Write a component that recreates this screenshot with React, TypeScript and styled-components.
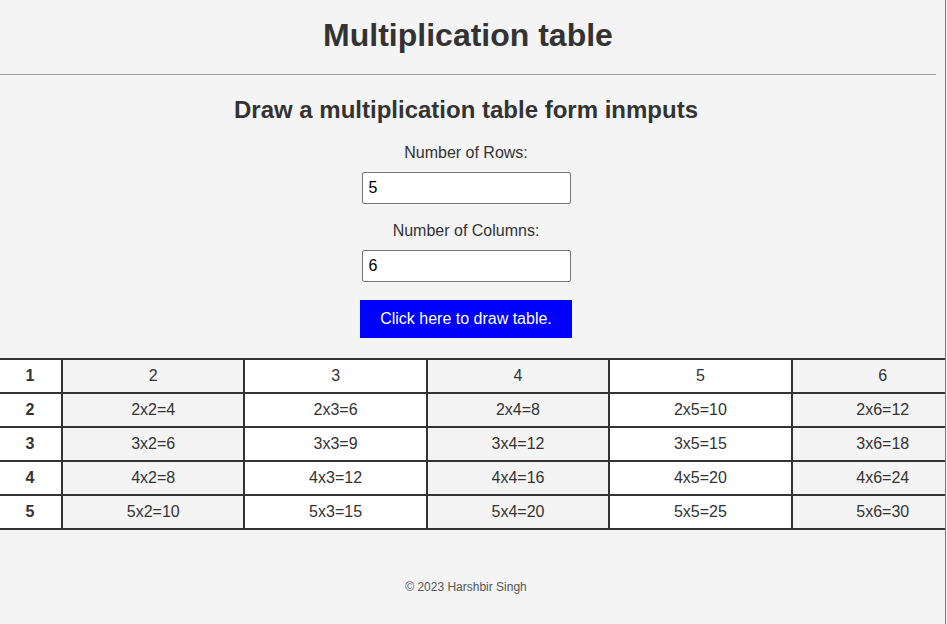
import React, { useState } from "react";
import styled, { createGlobalStyle } from "styled-components";

const GlobalStyle = createGlobalStyle`
  html, body {
    margin: 0;
    padding: 0;
    background-color: #f4f4f4;
  }
  body {
    font-family: "Liberation Sans", Arial, sans-serif;
    color: #333333;
    overflow: hidden;
  }
`;

const Page = styled.div`
  width: 946px;
  min-height: 624px;
  box-sizing: border-box;
  border-right: 1px solid #777777;
  background-color: #f4f4f4;
  overflow: hidden;
`;

const Header = styled.header`
  width: 936px;
  padding-top: 17px;
  text-align: center;
`;

const Title = styled.h1`
  margin: 0;
  font-size: 32px;
  line-height: 37px;
  font-weight: bold;
`;

const Rule = styled.hr`
  margin: 20px 0 0;
  border: none;
  border-top: 1px solid #999999;
  height: 0;
`;

const Main = styled.main`
  width: 932px;
  display: flex;
  flex-direction: column;
  align-items: center;
  padding-top: 21px;
`;

const SubTitle = styled.h2`
  margin: 0 0 20px;
  font-size: 24px;
  line-height: 28px;
  font-weight: bold;
`;

const Field = styled.div<{ gap: number }>`
  display: flex;
  flex-direction: column;
  align-items: center;
  gap: 10px;
  margin-bottom: ${(p) => p.gap}px;
`;

const Label = styled.label`
  font-size: 16px;
  line-height: 18px;
`;

const Input = styled.input`
  width: 209px;
  height: 32px;
  box-sizing: border-box;
  padding: 0 6px;
  border: 1px solid #767676;
  border-radius: 2px;
  background: #ffffff;
  font-family: "Liberation Sans", Arial, sans-serif;
  font-size: 16px;
  color: #000000;
  outline: none;
`;

const DrawButton = styled.button`
  width: 212px;
  height: 38px;
  border: none;
  background-color: #0000ff;
  color: #ffffff;
  font-family: "Liberation Sans", Arial, sans-serif;
  font-size: 16px;
  cursor: pointer;
`;

const TableWrap = styled.div`
  margin-top: 20px;
  width: 945px;
  overflow: hidden;
`;

const Table = styled.table`
  margin-left: -3px;
  width: 978px;
  border-collapse: collapse;
  table-layout: fixed;
`;

const Cell = styled.td<{ head?: boolean }>`
  border: 2px solid #333333;
  padding: 7px 0;
  height: 18px;
  line-height: 18px;
  font-size: 16px;
  text-align: center;
  font-weight: ${(p) => (p.head ? "bold" : "normal")};
  background-color: #ffffff;
  &:nth-child(even) {
    background-color: #f4f4f4;
  }
`;

const Footer = styled.footer`
  width: 932px;
  padding-top: 50px;
  text-align: center;
  font-size: 12px;
  line-height: 14px;
  color: #555555;
`;

const App = () => {
  const [rows, setRows] = useState("5");
  const [cols, setCols] = useState("6");
  const [size, setSize] = useState({ r: 5, c: 6 });

  const draw = () => {
    setSize({ r: Number(rows) || 0, c: Number(cols) || 0 });
  };

  const colNums = Array.from({ length: Math.max(size.c - 1, 0) }, (_, i) => i + 2);
  const rowNums = Array.from({ length: Math.max(size.r - 1, 0) }, (_, i) => i + 2);

  return (
    <Page>
      <GlobalStyle />
      <Header>
        <Title>Multiplication table</Title>
        <Rule />
      </Header>
      <Main>
        <SubTitle>Draw a multiplication table form inmputs</SubTitle>
        <Field gap={18}>
          <Label htmlFor="rows">Number of Rows:</Label>
          <Input id="rows" value={rows} onChange={(e) => setRows(e.target.value)} />
        </Field>
        <Field gap={18}>
          <Label htmlFor="cols">Number of Columns:</Label>
          <Input id="cols" value={cols} onChange={(e) => setCols(e.target.value)} />
        </Field>
        <DrawButton onClick={draw}>Click here to draw table.</DrawButton>
      </Main>
      <TableWrap>
        <Table>
          <colgroup>
            <col style={{ width: 64 }} />
          </colgroup>
          <tbody>
            <tr>
              <Cell head>1</Cell>
              {colNums.map((c) => (
                <Cell key={c}>{c}</Cell>
              ))}
            </tr>
            {rowNums.map((r) => (
              <tr key={r}>
                <Cell head>{r}</Cell>
                {colNums.map((c) => (
                  <Cell key={c}>
                    {r}x{c}={r * c}
                  </Cell>
                ))}
              </tr>
            ))}
          </tbody>
        </Table>
      </TableWrap>
      <Footer>© 2023 Harshbir Singh</Footer>
    </Page>
  );
};

export default App;
